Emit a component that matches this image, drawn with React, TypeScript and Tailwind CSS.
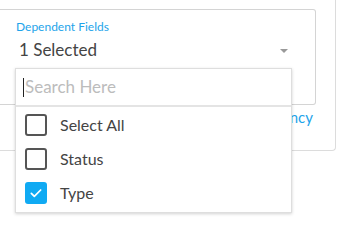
import React from "react";

const items = [
  { label: "Select All", checked: false },
  { label: "Status", checked: false },
  { label: "Type", checked: true },
];

function Checkbox({ checked }: { checked: boolean }) {
  if (checked) {
    return (
      <div className="flex h-[22px] w-[22px] items-center justify-center rounded-[3px] bg-[#10aaf3]">
        <svg viewBox="0 0 24 24" className="h-[16px] w-[16px]" fill="none" stroke="white" strokeWidth="2.6" strokeLinecap="round" strokeLinejoin="round">
          <path d="M5 12.5l4.5 4.5L19 7.5" />
        </svg>
      </div>
    );
  }
  return <div className="h-[22px] w-[22px] rounded-[3px] border-2 border-[#555]" />;
}

export default function App() {
  return (
    <div className="relative h-[251px] w-[337px] overflow-hidden bg-white font-['Lato','Liberation_Sans',sans-serif]">
      <div className="h-[151px] w-[336px] rounded-br-[4px] border-r border-b border-[#dcdcdc] pt-[9px]">
        <div className="h-[96px] w-[316px] rounded-tr-[3px] rounded-br-[3px] border-t border-r border-b border-[#d4d4d4] pl-[16px] pt-[9px]">
          <div className="text-[12px] leading-[16px] text-[#1ea4ea]">Dependent Fields</div>
          <div className="flex items-center pr-[27px]">
            <span className="pl-[3px] text-[17px] leading-[30px] text-[#444]">1 Selected</span>
            <span className="ml-auto mt-[2px] h-0 w-0 border-x-[4px] border-t-[4px] border-x-transparent border-t-[#999]" />
          </div>
        </div>
        <div className="w-[313px] pt-[2px] text-right text-[15px] leading-[20px] text-[#1ea4ea]">Add Dependency</div>
      </div>

      <div className="absolute left-[15px] top-[68px] h-[145px] w-[277px] border border-[#dedede] bg-white shadow-[0_1px_3px_rgba(0,0,0,0.18)]">
        <div className="flex h-[38px] items-center border-b-2 border-[#e4e4e4] pl-[7px]">
          <span className="h-[19px] w-px bg-[#222]" />
          <span className="pl-[1px] text-[17px] text-[#bcbcbc]">Search Here</span>
        </div>
        <div className="pt-[1px]">
          {items.map((item) => (
            <div key={item.label} className="flex h-[34px] items-center gap-[13px] pl-[9px]">
              <Checkbox checked={item.checked} />
              <span className="text-[16px] text-[#444]">{item.label}</span>
            </div>
          ))}
        </div>
      </div>
    </div>
  );
}
